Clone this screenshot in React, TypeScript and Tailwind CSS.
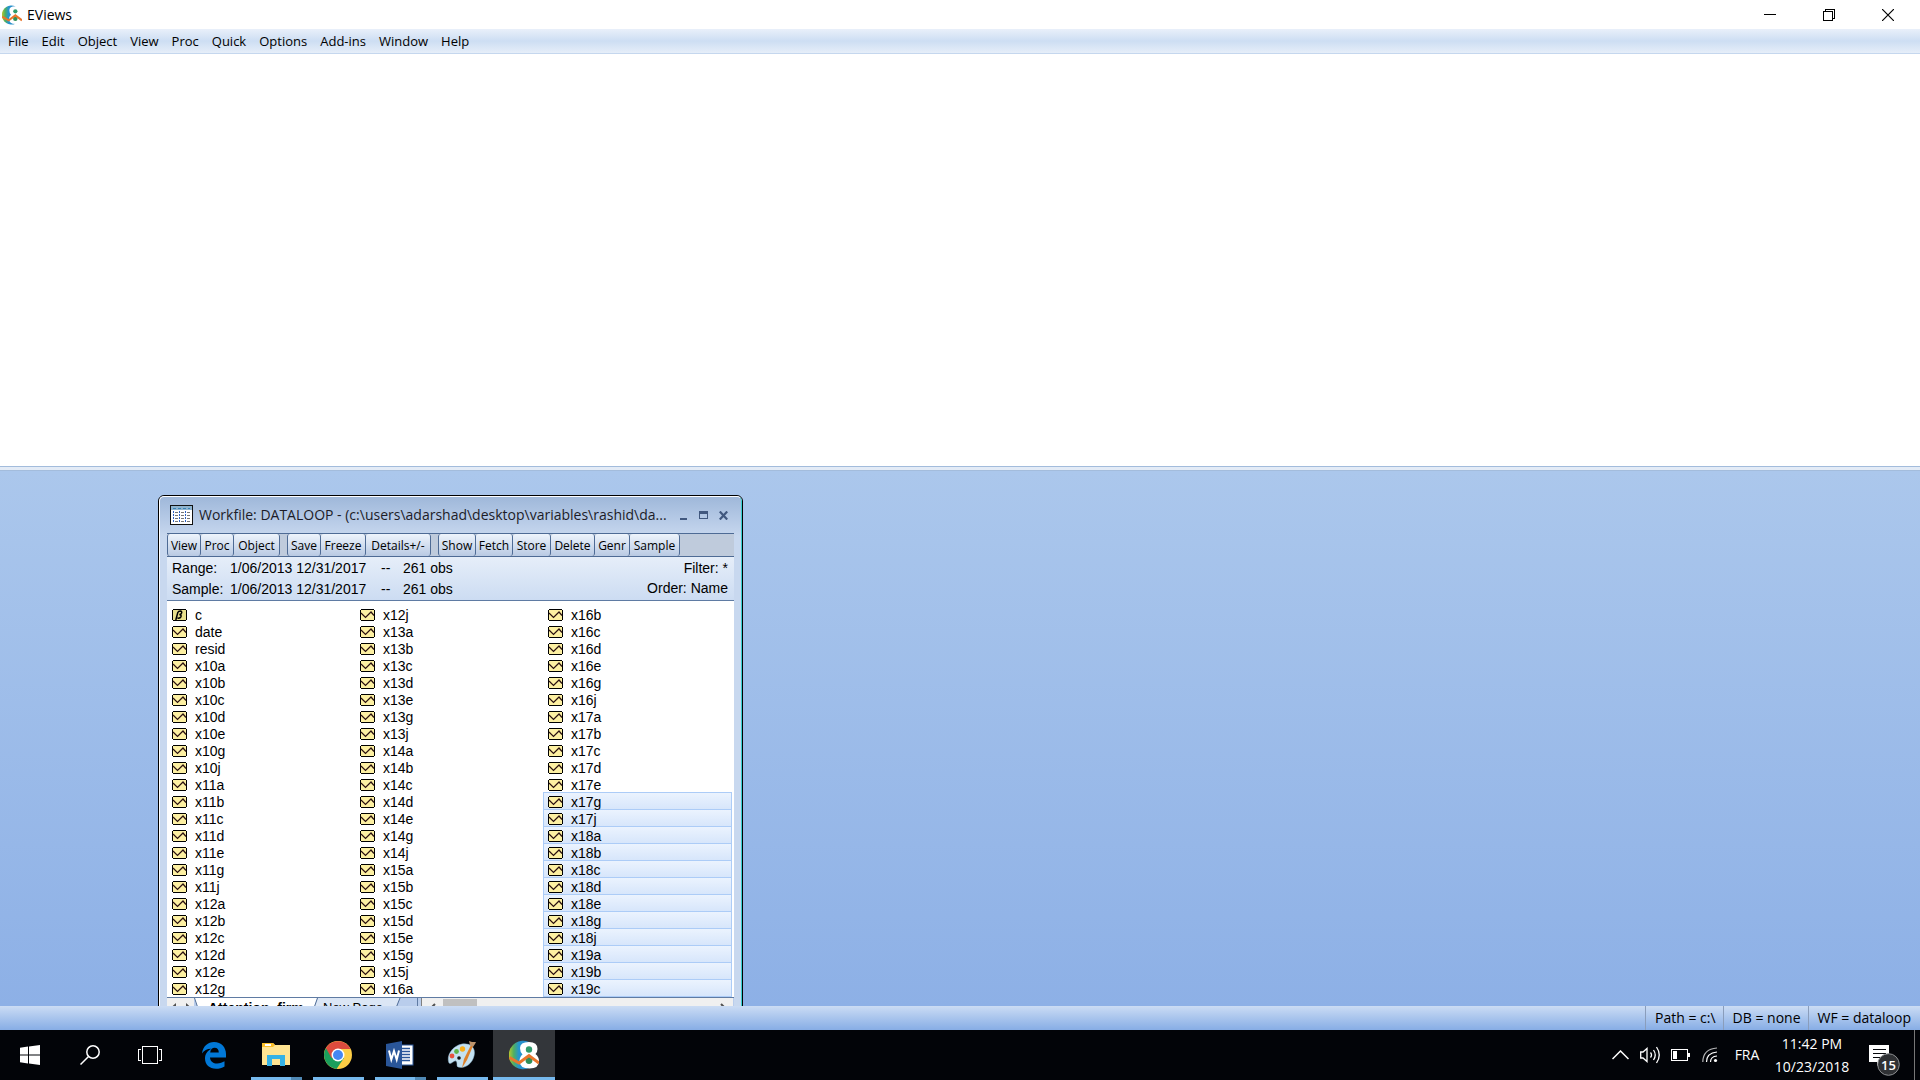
import React, { ReactNode } from "react";

const columns = [
    ["c", "date", "resid", "x10a", "x10b", "x10c", "x10d", "x10e", "x10g", "x10j", "x11a", "x11b", "x11c", "x11d", "x11e", "x11g", "x11j", "x12a", "x12b", "x12c", "x12d", "x12e", "x12g"],
    ["x12j", "x13a", "x13b", "x13c", "x13d", "x13e", "x13g", "x13j", "x14a", "x14b", "x14c", "x14d", "x14e", "x14g", "x14j", "x15a", "x15b", "x15c", "x15d", "x15e", "x15g", "x15j", "x16a"],
    ["x16b", "x16c", "x16d", "x16e", "x16g", "x16j", "x17a", "x17b", "x17c", "x17d", "x17e", "x17g", "x17j", "x18a", "x18b", "x18c", "x18d", "x18e", "x18g", "x18j", "x19a", "x19b", "x19c"],
];

const selected = ["x17g", "x17j", "x18a", "x18b", "x18c", "x18d", "x18e", "x18g", "x18j", "x19a", "x19b", "x19c"];

const menus = ["File", "Edit", "Object", "View", "Proc", "Quick", "Options", "Add-ins", "Window", "Help"];

const toolGroups = [
    [
        { label: "View", width: "w-[34px]" },
        { label: "Proc", width: "w-[33px]" },
        { label: "Object", width: "w-[46px]" },
    ],
    [
        { label: "Save", width: "w-[34px]" },
        { label: "Freeze", width: "w-[45px]" },
        { label: "Details+/-", width: "w-[65px]" },
    ],
    [
        { label: "Show", width: "w-[38px]" },
        { label: "Fetch", width: "w-[37px]" },
        { label: "Store", width: "w-[38px]" },
        { label: "Delete", width: "w-[44px]" },
        { label: "Genr", width: "w-[35px]" },
        { label: "Sample", width: "w-[50px]" },
    ],
];

const SeriesIcon = () => (
    <svg width="15" height="12" viewBox="0 0 15 12" className="shrink-0" shapeRendering="crispEdges">
        <path d="M1 0H14V1H15V11H14V12H1V11H0V1H1Z" fill="#000" />
        <rect x="1" y="1" width="13" height="10" fill="#fdf0a2" />
        <path d="M1 4L5.5 8.5L11 3L14 6.5" fill="none" stroke="#2a1010" strokeWidth="1.2" shapeRendering="auto" />
    </svg>
);

const CoefIcon = () => (
    <svg width="15" height="12" viewBox="0 0 15 12" className="shrink-0">
        <path d="M1 0H14V1H15V11H14V12H1V11H0V1H1Z" fill="#000" shapeRendering="crispEdges" />
        <rect x="1" y="1" width="13" height="10" fill="#e9e08c" shapeRendering="crispEdges" />
        <path d="M3.8 11L5.8 3.6Q6.4 2 8.3 2Q10.2 2.2 9.6 4Q9.2 5.3 7.4 5.5Q9.6 5.8 9 7.6Q8.2 9.6 5.4 9" fill="none" stroke="#000" strokeWidth="1.5" />
    </svg>
);

const WorkfileIcon = () => (
    <svg width="23" height="20" viewBox="0 0 23 20" className="shrink-0" shapeRendering="crispEdges">
        <rect width="23" height="20" fill="#111" />
        <rect x="1" y="1" width="21" height="18" fill="#fff" />
        <rect x="1" y="1" width="21" height="4" fill="#8fb4cf" />
        <path d="M3 3.5H20" stroke="#3a83b4" strokeDasharray="3 2" />
        <path d="M3.5 6V18M9.5 6V18M15.5 6V18" stroke="#2e62c4" strokeDasharray="2 1" />
        <path d="M5 7.5H8M11 7.5H14M17 7.5H20M5 10.5H8M11 10.5H14M17 10.5H20M5 13.5H8M11 13.5H14M17 13.5H20M5 16.5H8M11 16.5H14M17 16.5H20" stroke="#777" />
    </svg>
);

const EViewsIcon = ({ size, id }: { size: number; id: string }) => (
    <svg width={size} height={size} viewBox="0 0 30 30" className="shrink-0">
        <defs>
            <linearGradient id={id}>
                <stop offset="0" stopColor="#b8c92c" />
                <stop offset="0.25" stopColor="#4fae62" />
                <stop offset="0.5" stopColor="#2495cf" />
                <stop offset="1" stopColor="#2a86c4" />
            </linearGradient>
        </defs>
        <path d="M20 2A14.300 14.300 0 1 0 20 28Z" fill={`url(#${id})`} />
        <path d="M11 8Q11 2 20 2Q28.500 2 28.500 9Q28.500 12 26.500 14Q30 17 30 21Q30 28.500 20.500 28.500Q10.500 28.500 10.500 21Q10.500 17 13.500 14.500Q11 12 11 8Z" fill="#fff" />
        <circle cx="20" cy="9.500" r="3.200" fill="#2f9a6c" />
        <circle cx="20" cy="20.500" r="3.400" fill="#2f8f5a" />
        <path d="M0.500 17.500L10 23L20 15.500L30 23" fill="none" stroke="#e8762c" strokeWidth="3" />
    </svg>
);

const EdgeIcon = () => (
    <svg width="26" height="28" viewBox="0 0 26 28">
        <path d="M1 12.5C2 5 7 1 13 1C20.500 1 25 6.500 25 13V16.500H9C9.300 20.500 12.500 22.500 16 22.500C19 22.500 21.500 21.500 23.500 20.300V25.500C21 27 18 27.800 15 27.800C8.500 27.800 4 23.500 4 17.500C4 13 6.500 9.500 10.500 7.700C6.500 7.500 3 9.500 1 12.500ZM9.200 11.500H17.800C17.800 8.500 16.200 6.800 13.600 6.800C11.200 6.800 9.400 8.800 9.200 11.500Z" fill="#0178d7" />
    </svg>
);

const ExplorerIcon = () => (
    <svg width="28" height="24" viewBox="0 0 28 24">
        <path d="M0 2Q0 0 2 0H11L13 2H28V22H0Z" fill="#ffe492" />
        <path d="M0 0H11L13 2L11 4H0Z" fill="#fbbf29" />
        <rect x="3" y="1" width="6" height="2" fill="#fff" />
        <path d="M5 23V12H23V23H18V16H10V23Z" fill="#35b2e6" />
    </svg>
);

const ChromeIcon = () => (
    <svg width="28" height="28" viewBox="0 0 28 28">
        <circle cx="14" cy="14" r="14" fill="#fdce46" />
        <path d="M14 14L1.9 7A14 14 0 0 0 12.500 27.900L20 17Z" fill="#1a9f5c" />
        <path d="M14 14L7.500 17L1.900 7A14 14 0 0 1 26.500 8H14Z" fill="#dc4b3e" />
        <circle cx="14" cy="14" r="6.500" fill="#fff" />
        <circle cx="14" cy="14" r="5" fill="#4587f3" />
    </svg>
);

const WordIcon = () => (
    <svg width="28" height="28" viewBox="0 0 28 28">
        <rect x="14" y="4" width="13" height="20" fill="#fff" stroke="#2a5699" />
        <path d="M16 7.500H24M16 10.500H24M16 13.500H24M16 16.500H24M16 19.500H24" stroke="#2a5699" strokeWidth="1.400" />
        <path d="M0 3L16 0V28L0 25Z" fill="#2a5699" />
        <path d="M3 9.500L5.300 18.500L8 10L10.700 18.500L13 9.500" fill="none" stroke="#fff" strokeWidth="2" />
    </svg>
);

const PaintIcon = () => (
    <svg width="30" height="30" viewBox="0 0 30 30">
        <path d="M2 23C-1 16 5 6 15 4C24 3 29 8 27 16C25 24 18 29 11 27C9 26 11 23 9 21C7 20 4 25 2 23Z" fill="#c4e1f1" stroke="#8fb9d3" strokeWidth="0.500" />
        <circle cx="5" cy="16" r="2.400" fill="#e8533f" />
        <circle cx="9.500" cy="11.500" r="2.400" fill="#5fb548" />
        <circle cx="15.500" cy="9" r="2.700" fill="#f9ae1c" />
        <circle cx="12" cy="18" r="1.800" fill="#111" />
        <path d="M15 28L17 19L24 5L26 6L20 20Z" fill="#dd812b" />
        <path d="M22 1L25 2L29 2L28 4L26 7L23 5Z" fill="#bd946c" />
    </svg>
);

const StartIcon = () => (
    <svg width="20" height="20" viewBox="0 0 20 20" fill="#fff">
        <path d="M0 2.800L8 1.600V9.500H0ZM9 1.500L20 0V9.500H9ZM0 10.500H8V18.400L0 17.200ZM9 10.500H20V20L9 18.500Z" />
    </svg>
);

const SearchIcon = () => (
    <svg width="20" height="20" viewBox="0 0 20 20" fill="none" stroke="#fff" strokeWidth="1.500">
        <circle cx="13" cy="7" r="6.200" />
        <path d="M8.500 11.500L0.500 19.500" />
    </svg>
);

const TaskViewIcon = () => (
    <svg width="24" height="18" viewBox="0 0 24 18" fill="none" stroke="#fff" shapeRendering="crispEdges">
        <rect x="4.500" y="0.500" width="15" height="17" />
        <path d="M3 3.500H0.500V14.500H3M21 3.500H23.500V14.500H21" />
    </svg>
);

interface TaskButtonProps {
    label: string;
    children: ReactNode;
    running?: boolean;
    stacked?: boolean;
    active?: boolean;
}

const TaskButton = ({ label, children, running, stacked, active }: TaskButtonProps) => (
    <button aria-label={label} className={"flex h-full w-[62px] flex-col items-center " + (active ? "bg-[#33363a]" : "")}>
        <span className="flex flex-1 items-center justify-center pt-0.5">{children}</span>
        <span className={"flex h-[3px] " + (active ? "w-full" : "w-[51px]")}>
            {running && <span className="h-full flex-1 bg-[#76b9ed]" />}
            {stacked && <span className="h-full w-[11px] bg-[#5089b5]" />}
        </span>
    </button>
);

const WorkfileWindow = () => (
    <section className="absolute left-[158px] top-6 w-[585px] overflow-hidden rounded-t-md border border-black bg-[#c8d8ef]">
        <div className="rounded-t-[5px] border-t border-r border-l border-t-white border-r-[#35d0cf] border-l-white bg-linear-to-b from-[#9fb8da] to-[#c8d8ef] to-[40px] px-[7px]">
            <header className="flex h-9 items-center pr-1.5 pl-[3px]">
                <WorkfileIcon />
                <h1 className="flex-1 pl-1.5 text-sm leading-5 whitespace-nowrap text-[#1c1c28]">
                    Workfile: DATALOOP - (c:\users\adarshad\desktop\variables\rashid\da...
                </h1>
                <div className="flex shrink-0 items-center gap-[11px] text-[#41587f]">
                    <button aria-label="Minimize">
                        <svg width="8" height="9" viewBox="0 0 8 9" fill="currentColor"><rect x="0" y="7" width="7" height="2" /></svg>
                    </button>
                    <button aria-label="Maximize">
                        <svg width="9" height="9" viewBox="0 0 9 9" fill="none" stroke="currentColor" shapeRendering="crispEdges">
                            <rect x="0.500" y="1.500" width="8" height="6" />
                            <path d="M0 1.500H9" strokeWidth="3" />
                        </svg>
                    </button>
                    <button aria-label="Close">
                        <svg width="9" height="9" viewBox="0 0 9 9" fill="none" stroke="currentColor" strokeWidth="2.200"><path d="M0.800 0.500L8.200 8.500M8.200 0.500L0.800 8.500" /></svg>
                    </button>
                </div>
            </header>

            {/* toolbar */}
            <div className="flex h-6 gap-[7px] border-y border-[#4e6b95] bg-[#bfcbdc]">
                {toolGroups.map((group, i) => (
                    <div key={i} className="flex">
                        {group.map((tool, j) => (
                            <button
                                key={tool.label}
                                className={
                                    "rounded-[3px] border-r border-[#4e6b95] bg-linear-to-b from-[#eef4fc] to-[#b9cae3] pt-0.5 text-center text-xs whitespace-nowrap text-black " +
                                    tool.width + (j === 0 ? " border-l" : "")
                                }
                            >
                                {tool.label}
                            </button>
                        ))}
                    </div>
                ))}
            </div>

            {/* range and sample */}
            <div className="flex h-11 justify-between border-b border-[#5f7ba3] bg-linear-to-b from-[#e6eef9] to-[#ccdcf2] px-[5px] pt-px font-['Liberation_Sans',sans-serif] text-sm leading-5">
                <dl className="grid grid-cols-[58px_151px_22px_auto]">
                    <dt>Range:</dt>
                    <dd>1/06/2013 12/31/2017</dd>
                    <dd>--</dd>
                    <dd>261 obs</dd>
                    <dt>Sample:</dt>
                    <dd>1/06/2013 12/31/2017</dd>
                    <dd>--</dd>
                    <dd>261 obs</dd>
                </dl>
                <div className="pr-px text-right">
                    <p>Filter: *</p>
                    <p>Order: Name</p>
                </div>
            </div>

            {/* objects */}
            <div className="flex border-b border-[#5f7ba3] bg-white pt-1 font-['Liberation_Sans',sans-serif] text-sm leading-4">
                {columns.map((names, i) => (
                    <ul key={i} className="w-[188px] last:w-[189px]">
                        {names.map((name) => (
                            <li
                                key={name}
                                className={
                                    "flex h-[17px] items-center gap-2 border-x border-t pt-px pl-1 last:h-[18px] last:border-b " +
                                    (selected.includes(name)
                                        ? "border-[#acccf7] bg-linear-to-b from-[#ebf3fe] to-[#d7e6fb]"
                                        : "border-transparent")
                                }
                            >
                                {name === "c" ? <CoefIcon /> : <SeriesIcon />}
                                {name}
                            </li>
                        ))}
                    </ul>
                ))}
            </div>

            {/* page tabs */}
            <div className="flex h-6 bg-[#b9cdec] font-['Liberation_Sans',sans-serif] text-[13px] leading-5">
                <div className="flex w-7 items-start justify-around bg-[#f0f0f0] pt-[5px]">
                    <svg width="6" height="9" viewBox="0 0 6 9" fill="#505050"><path d="M5 0V9L0 4.500Z" /></svg>
                    <svg width="6" height="9" viewBox="0 0 6 9" fill="#505050"><path d="M1 0V9L6 4.500Z" /></svg>
                </div>
                <button className="-ml-px flex w-[120px] bg-white text-sm leading-5 font-bold">
                    <svg width="8" height="22" viewBox="0 0 8 22" className="shrink-0"><path d="M0 0L8 22H0Z" fill="#b9cdec" /><path d="M0.500 0L8 22" stroke="#4e6b95" /></svg>
                    <span className="pl-1.5">Attention_firm</span>
                </button>
                <button className="flex w-[82px] bg-[#dbe6f5]">
                    <svg width="8" height="22" viewBox="0 0 8 22" className="shrink-0"><path d="M3 0L0 9V22H0V0Z" fill="#fff" /><path d="M3.500 0L0 10" stroke="#4e6b95" /></svg>
                    <span className="pl-px">New Page</span>
                </button>
                <div className="flex w-[22px] border-r border-[#5f7ba3]">
                    <svg width="6" height="22" viewBox="0 0 6 22"><path d="M0 0H4L0 10Z" fill="#dbe6f5" /><path d="M4 0L0 10" stroke="#4e6b95" /></svg>
                </div>
                <div className="mr-px ml-[3px] flex flex-1 items-start border-l border-[#808080] bg-[#f0f0f0] pt-px">
                    <svg width="21" height="20" viewBox="0 0 21 20" fill="none" stroke="#505050" strokeWidth="2"><path d="M13 5L9 9L13 13" /></svg>
                    <span className="h-4 w-[34px] bg-[#c0c0c0]" />
                    <svg width="18" height="20" viewBox="0 0 18 20" className="ml-auto" fill="none" stroke="#505050" strokeWidth="2"><path d="M6 5L10 9L6 13" /></svg>
                </div>
            </div>
        </div>
    </section>
);

const Tray = () => (
    <div className="flex h-full items-center text-white">
        <button aria-label="Show hidden icons" className="mr-[11px]">
            <svg width="17" height="10" viewBox="0 0 17 10" fill="none" stroke="#fff" strokeWidth="1.500"><path d="M0.500 9L8.500 1L16.500 9" /></svg>
        </button>
        <button aria-label="Volume" className="mr-[10px]">
            <svg width="21" height="18" viewBox="0 0 21 18" fill="none" stroke="#fff" strokeWidth="1.300">
                <path d="M0.700 6H3L7 2.500V15.500L3 12H0.700Z" />
                <path d="M10.500 6.500Q12.500 9 10.500 11.500M13.500 4Q17 9 13.500 14M16.500 1Q22 9 16.500 17" />
            </svg>
        </button>
        <button aria-label="Battery" className="mr-3">
            <svg width="19" height="12" viewBox="0 0 19 12" fill="none" stroke="#fff" shapeRendering="crispEdges">
                <rect x="0.500" y="0.500" width="16" height="11" />
                <rect x="2" y="2" width="4" height="8" fill="#fff" stroke="none" />
                <path d="M18 4V8" strokeWidth="2" />
            </svg>
        </button>
        <button aria-label="Network" className="mr-4">
            <svg width="16" height="16" viewBox="0 0 16 16" fill="none" stroke="#fff" strokeWidth="1.200">
                <path d="M0.800 15Q1 2 15 1" opacity="0.700" />
                <path d="M4.500 15Q4.500 6 15 5M8.500 15Q8.500 9.500 15 9" />
                <circle cx="13.500" cy="13.500" r="1.600" fill="#fff" stroke="none" />
            </svg>
        </button>
        <button className="w-[26px] text-sm leading-5">FRA</button>
        <button className="ml-2 w-[88px] text-center text-sm leading-[23px]">
            <time className="block">11:42 PM</time>
            <time className="block">10/23/2018</time>
        </button>
        <button aria-label="Notifications" className="relative mr-[14px] mb-1 ml-[13px] self-end">
            <svg width="31" height="31" viewBox="0 0 31 31">
                <path d="M0 0H20V17H12L8 21V17H0Z" fill="#fff" />
                <path d="M4 4.500H17M4 8.500H17M4 12.500H12" stroke="#05070b" strokeWidth="1.200" />
                <circle cx="19.500" cy="19.500" r="10.800" fill="#2f3134" stroke="#8b8d8f" />
            </svg>
            <span className="absolute inset-x-0 top-2.5 pl-2 text-center text-[13px] leading-5 font-semibold">15</span>
        </button>
        <span className="h-full w-1.5 border-l border-[#777]" />
    </div>
);

const App = () => {
    return (
        <main className="flex h-screen min-w-[1024px] flex-col overflow-hidden bg-white font-['Open_Sans','Noto_Sans',sans-serif] text-black">
            <header className="flex h-[29px] shrink-0 items-center pl-0.5">
                <EViewsIcon size={20} id="title-globe" />
                <span className="pl-[5px] text-sm leading-5">EViews</span>
                <div className="ml-auto flex items-center gap-[47px] pr-[26px]">
                    <button aria-label="Minimize">
                        <svg width="12" height="12" viewBox="0 0 12 12" stroke="#000" shapeRendering="crispEdges"><path d="M0 5.500H12" /></svg>
                    </button>
                    <button aria-label="Restore">
                        <svg width="12" height="12" viewBox="0 0 12 12" fill="none" stroke="#000" shapeRendering="crispEdges">
                            <path d="M0.500 2.500H9.500V11.500H0.500ZM2.500 2.500V0.500H11.500V9.500H9.500" />
                        </svg>
                    </button>
                    <button aria-label="Close">
                        <svg width="12" height="12" viewBox="0 0 12 12" stroke="#000" strokeWidth="1.200"><path d="M0 0L12 12M12 0L0 12" /></svg>
                    </button>
                </div>
            </header>

            <nav className="flex h-[25px] shrink-0 items-center gap-[13px] border-b border-[#c5d7ee] bg-linear-to-b from-[#e9f0fa] via-[#cddef3] to-[#e6eef9] pl-2 text-[13px] leading-5">
                {menus.map((menu) => (
                    <button key={menu}>{menu}</button>
                ))}
            </nav>

            <section className="flex min-h-0 flex-[417] flex-col">
                <textarea aria-label="Command" className="block w-full flex-1 resize-none bg-white p-1 outline-none" />
                <div className="h-[5px] shrink-0 border-y border-[#a3bcdc] bg-[#e3ebf6]" />
            </section>

            <section className="relative min-h-0 flex-[535] overflow-hidden bg-linear-to-b from-[#abc7ec] to-[#8db0e6]">
                <WorkfileWindow />
            </section>

            <footer className="flex h-6 shrink-0 items-stretch justify-end bg-linear-to-b from-[#cbdcf4] to-[#87ade5] text-sm leading-6">
                <span className="border-l border-[#8a9dbb] pr-[7px] pl-[9px]">Path = c:\</span>
                <span className="border-l border-[#8a9dbb] pr-[7px] pl-[9px]">DB = none</span>
                <span className="border-l border-[#8a9dbb] px-[9px]">WF = dataloop</span>
            </footer>

            <footer className="flex h-[50px] shrink-0 items-center justify-between bg-[#020408]">
                <div className="flex h-full">
                    <button aria-label="Start" className="flex w-[60px] items-center justify-center"><StartIcon /></button>
                    <button aria-label="Search" className="flex w-[60px] items-center justify-center"><SearchIcon /></button>
                    <button aria-label="Task View" className="mr-[3px] flex w-[60px] items-center justify-center"><TaskViewIcon /></button>
                    <TaskButton label="Edge"><EdgeIcon /></TaskButton>
                    <TaskButton label="File Explorer" running stacked><ExplorerIcon /></TaskButton>
                    <TaskButton label="Chrome" running><ChromeIcon /></TaskButton>
                    <TaskButton label="Word" running stacked><WordIcon /></TaskButton>
                    <TaskButton label="Paint" running><PaintIcon /></TaskButton>
                    <TaskButton label="EViews" running active><EViewsIcon size={30} id="task-globe" /></TaskButton>
                </div>
                <Tray />
            </footer>
        </main>
    );
};

export default App;
